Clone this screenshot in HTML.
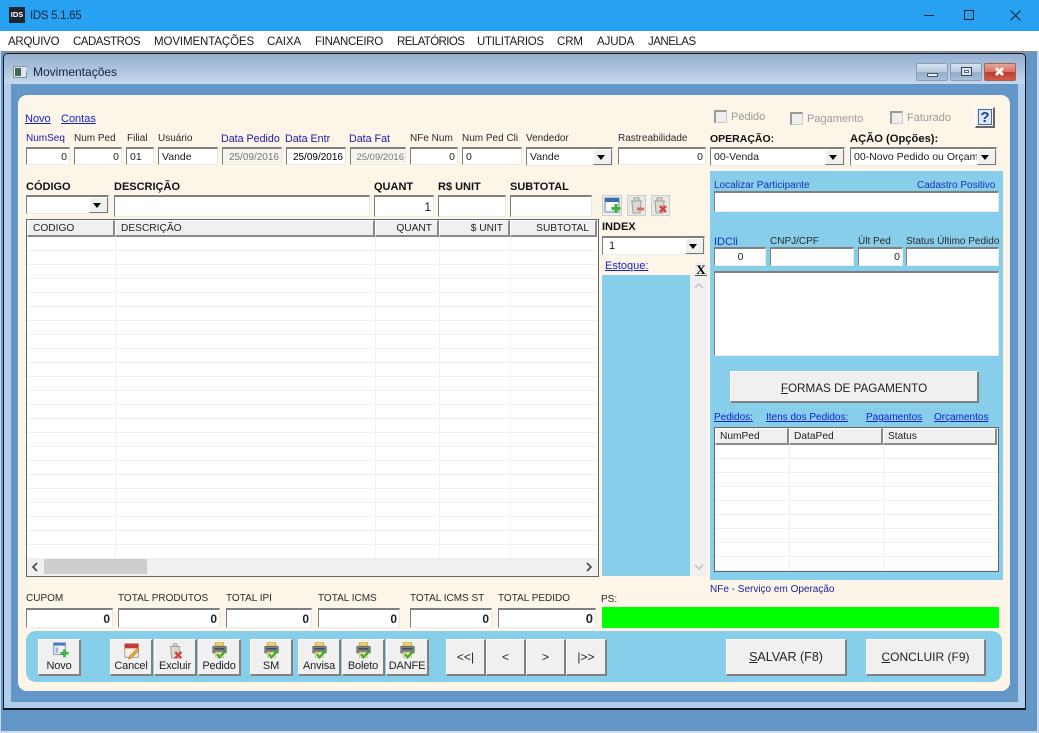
<!DOCTYPE html>
<html><head><meta charset="utf-8">
<style>
html,body{margin:0;padding:0;width:1039px;height:733px;overflow:hidden;background:#6497c8;font-family:"Liberation Sans",sans-serif;font-size:11px;color:#222}
div,a,span.t{position:absolute;box-sizing:border-box}
.l{white-space:nowrap;line-height:14px;height:14px;font-size:10px;color:#2a2a2a}
.b{color:#1a1aa8}
.lk{color:#1622c8;text-decoration:underline}
.h{font-weight:bold;color:#111;font-size:11px}
.f{background:#fff;border-top:2px solid #808080;border-left:1px solid #808080;border-right:1px solid #e8e8e8;border-bottom:1px solid #ececec;line-height:17px;font-size:10.5px;padding:0 2px 0 3px;white-space:nowrap;overflow:hidden;color:#222}
.r{text-align:right}
.d{color:#777;background:#f7f4ee}
.ar{position:absolute;right:0;top:0;bottom:0;width:17px;background:#f0f0f0;border:1px solid #fff;border-right-color:#777;border-bottom-color:#777}
.ar:after{content:"";position:absolute;left:3px;top:50%;margin-top:-2px;border:4px solid transparent;border-top:5px solid #000;border-bottom:0}
.btn{background:#f0f0f0;border:1px solid #fff;border-right:2px solid #808080;border-bottom:2px solid #808080;text-align:center;color:#222}
.ib{font-size:11px;letter-spacing:-.15px;line-height:14px;padding-top:19px}
.ib svg{position:absolute;left:12px;top:2px}
.nb{font-size:12px;line-height:34px}
.big{font-size:12.5px;line-height:33px}
.th{position:absolute;top:0;height:100%;background:#f0f0f0;border-right:2px solid #8a8a8a;border-bottom:2px solid #8a8a8a;border-top:1px solid #fff;border-left:1px solid #fff;font-size:10.2px;line-height:16px;padding:0 4px;white-space:nowrap;color:#222}
.mg .th{padding:0 5px 0 5px}
.cb{width:13px;height:13px;background:#eee;border:1px solid #ccc;border-top:2px solid #999;border-left:2px solid #999}
.g{color:#9a9a9a;font-size:11px}
.m{top:31px;height:20px;line-height:22px;font-size:11.5px;letter-spacing:-.1px;color:#1a1a1a;white-space:nowrap}
.v{background:#f2f2f2;width:1px}
.wb{top:63px;height:18px;width:32px;border:1px solid #8a9db5;border-radius:2px;background:linear-gradient(#d6e2f0 0,#b5c8dd 50%,#93adc8 52%,#a8c0d8 100%)}
u{text-decoration:underline}
</style></head><body>
<svg width="0" height="0" style="position:absolute"><defs>
<symbol id="pr" viewBox="0 0 20 20">
<rect x="5" y="0" width="10" height="6" fill="#ecd070" stroke="#c0a848" stroke-width=".8"/>
<rect x="2" y="5" width="16" height="8" rx="1" fill="#80868a" stroke="#5a5f65" stroke-width=".8"/>
<rect x="4" y="7" width="12" height="2" fill="#484c50"/>
<rect x="5" y="12" width="10" height="6" fill="#f4e8b8" stroke="#c0a848" stroke-width=".6"/>
<path d="M7 14l3 4 7-8" fill="none" stroke="#33b02c" stroke-width="2.6"/>
</symbol></defs></svg>

<!-- title bar -->
<div style="left:0;top:0;width:1039px;height:31px;background:#27a2f3"></div>
<div style="left:9px;top:7px;width:16px;height:16px;background:#1c2630;color:#fff;font-size:7.5px;font-weight:bold;line-height:15px;text-align:center">IDS</div>
<div style="left:30px;top:8px;height:16px;line-height:16px;font-size:11.5px;letter-spacing:-.3px;color:#12263a;white-space:nowrap">IDS 5.1.65</div>
<svg style="position:absolute;left:920px;top:8px" width="110" height="16"><path d="M4 7.5H14" stroke="#123" stroke-width="1"/><rect x="44.5" y="2.5" width="9" height="9" fill="none" stroke="#123" stroke-width="1"/><path d="M90.5 2.500l10 10M100.500 2.500l-10 10" stroke="#123" stroke-width="1"/></svg>

<!-- menu -->
<div style="left:0;top:31px;width:1039px;height:20px;background:#fff"></div>
<div class="m" style="left:8px;letter-spacing:-.25px">ARQUIVO</div>
<div class="m" style="left:73px;letter-spacing:-.5px">CADASTROS</div>
<div class="m" style="left:154px">MOVIMENTAÇÕES</div>
<div class="m" style="left:267px">CAIXA</div>
<div class="m" style="left:315px;letter-spacing:-.3px">FINANCEIRO</div>
<div class="m" style="left:397px;letter-spacing:-.6px">RELATÓRIOS</div>
<div class="m" style="left:477px;letter-spacing:-.3px">UTILITARIOS</div>
<div class="m" style="left:557px">CRM</div>
<div class="m" style="left:597px">AJUDA</div>
<div class="m" style="left:648px;letter-spacing:-.5px">JANELAS</div>

<!-- MDI -->
<div style="left:0;top:51px;width:1039px;height:682px;background:#6497c8;border-left:1px solid #c9dcee;border-right:2px solid #c9dcee;border-bottom:2px solid #c9dcee"></div>
<div style="left:3px;top:51px;width:1034px;height:2px;background:#8a9097"></div>
<!-- child window -->
<div style="left:3px;top:53px;width:1023px;height:657px;background:#b0cdeb;border:1px solid #101820;border-bottom:2px solid #101820;border-radius:5px 5px 0 0"></div>
<div style="left:4px;top:54px;width:1021px;height:30px;background:linear-gradient(#94aecd,#c6d9ee);border-radius:4px 4px 0 0"></div>
<div style="left:11px;top:84px;width:1007px;height:618px;background:#6497c8"></div>
<svg style="position:absolute;left:13px;top:66px" width="16" height="13"><rect x=".5" y=".5" width="13" height="11" fill="#dfe6e8" stroke="#8a9094"/><rect x="2" y="2" width="6" height="8" fill="#3d6a5a"/><path d="M13 1v4" stroke="#fff"/></svg>
<div style="left:33px;top:65px;height:15px;line-height:15px;font-size:12px;color:#14233a;white-space:nowrap">Movimentações</div>
<div class="wb" style="left:916px"><div style="left:10px;top:9px;width:11px;height:4px;background:#eef;border:1px solid #456"></div></div>
<div class="wb" style="left:950px"><div style="left:10px;top:3px;width:11px;height:9px;background:#d8e4ef;border:1px solid #345"><div style="left:2px;top:2px;width:5px;height:3px;background:#fff;border:1px solid #567"></div></div></div>
<div class="wb" style="left:984px;border-color:#a8604f;background:linear-gradient(#e8a59a 0,#d6705f 50%,#b93a28 52%,#cf5a48 100%)"><svg style="position:absolute;left:9px;top:2px" width="12" height="12"><path d="M2 2l7 7M9 2l-7 7" stroke="#f4f4f4" stroke-width="3"/></svg></div>

<!-- cream -->
<div style="left:18px;top:95px;width:992px;height:596px;background:#fdf5e8;border-radius:9px"></div>

<!-- top links -->
<div class="l lk" style="left:25px;top:112px;font-size:11px">Novo</div>
<div class="l lk" style="left:61px;top:112px;font-size:11px">Contas</div>

<div class="cb" style="left:714px;top:110px"></div><div class="l g" style="left:731px;top:110px">Pedido</div>
<div class="cb" style="left:790px;top:112px"></div><div class="l g" style="left:807px;top:112px">Pagamento</div>
<div class="cb" style="left:890px;top:111px"></div><div class="l g" style="left:907px;top:111px">Faturado</div>
<div style="left:975px;top:107px;width:20px;height:21px;background:#f0f0f0;border:1px solid #fff;border-right:2px solid #666;border-bottom:2px solid #666"><div style="left:2px;top:1px;width:14px;height:16px;background:#dce8f6;border:1px solid #4a6a9a;color:#1a3fa0;font-weight:bold;font-size:15px;line-height:15px;text-align:center">?</div></div>

<!-- labels row 1 -->
<div class="l b" style="left:26px;top:132px">NumSeq</div>
<div class="l" style="left:74px;top:132px">Num Ped</div>
<div class="l" style="left:127px;top:132px">Filial</div>
<div class="l" style="left:158px;top:132px">Usuário</div>
<div class="l b" style="left:221px;top:132px;font-size:10.7px">Data Pedido</div>
<div class="l b" style="left:285px;top:132px;font-size:10.7px">Data Entr</div>
<div class="l b" style="left:349px;top:132px;font-size:10.7px">Data Fat</div>
<div class="l" style="left:410px;top:132px">NFe Num</div>
<div class="l" style="left:462px;top:132px">Num Ped Cli</div>
<div class="l" style="left:526px;top:132px">Vendedor</div>
<div class="l" style="left:618px;top:132px">Rastreabilidade</div>
<div class="l h" style="left:710px;top:132px;font-size:10.5px">OPERAÇÃO:</div>
<div class="l h" style="left:850px;top:132px;font-size:11.2px">AÇÃO (Opções):</div>

<!-- fields row 1 -->
<div class="f r" style="left:26px;top:147px;width:44px;height:18px">0</div>
<div class="f r" style="left:74px;top:147px;width:48px;height:18px">0</div>
<div class="f" style="left:126px;top:147px;width:28px;height:18px">01</div>
<div class="f" style="left:158px;top:147px;width:60px;height:18px">Vande</div>
<div class="f r d" style="left:222px;top:147px;width:60px;height:18px;font-size:10px">25/09/2016</div>
<div class="f r" style="left:286px;top:147px;width:60px;height:18px;font-size:10px;color:#000">25/09/2016</div>
<div class="f r d" style="left:350px;top:147px;width:56px;height:18px;font-size:9.5px;padding-right:1px;padding-left:1px">25/09/2016</div>
<div class="f r" style="left:410px;top:147px;width:48px;height:18px">0</div>
<div class="f" style="left:462px;top:147px;width:60px;height:18px">0</div>
<div class="f" style="left:526px;top:147px;width:87px;height:19px">Vande<span class="ar"></span></div>
<div class="f r" style="left:618px;top:147px;width:88px;height:18px">0</div>
<div class="f" style="left:710px;top:147px;width:135px;height:19px">00-Venda<span class="ar"></span></div>
<div class="f" style="left:850px;top:147px;width:147px;height:19px">00-Novo Pedido ou Orçame<span class="ar"></span></div>

<!-- row 2 -->
<div class="l h" style="left:26px;top:180px">CÓDIGO</div>
<div class="l h" style="left:114px;top:180px">DESCRIÇÃO</div>
<div class="l h" style="left:374px;top:180px">QUANT</div>
<div class="l h" style="left:438px;top:180px">R$ UNIT</div>
<div class="l h" style="left:510px;top:180px">SUBTOTAL</div>
<div class="f" style="left:26px;top:195px;width:83px;height:19px"><span class="ar"></span></div>
<div class="f" style="left:114px;top:195px;width:256px;height:22px"></div>
<div class="f r" style="left:374px;top:195px;width:60px;height:22px;font-size:12px;line-height:20px">1</div>
<div class="f" style="left:438px;top:195px;width:68px;height:22px"></div>
<div class="f" style="left:510px;top:195px;width:82px;height:22px"></div>

<!-- mini icon buttons -->
<svg style="position:absolute;left:602px;top:195px" width="68" height="22">
<rect x=".5" y=".5" width="19" height="20" fill="#eef0f0" stroke="#ccc"/>
<rect x="3" y="3" width="14" height="14" fill="#f8f8f8" stroke="#6a87b0"/><rect x="3" y="3" width="14" height="4" fill="#3f6cb0"/>
<path d="M14 9v9M9.500 13.500h9" stroke="#3cb53c" stroke-width="3"/>
<rect x="25.500" y=".5" width="18" height="20" fill="#e8e8e4" stroke="#ccc"/>
<path d="M29 6h11M30 6l1 12h7l1-12M32 3h5v3h-5z" fill="#d8d8d4" stroke="#9aa0a0"/><path d="M35 14h7" stroke="#d87060" stroke-width="3"/>
<rect x="49.500" y=".5" width="18" height="20" fill="#e8e8e4" stroke="#ccc"/>
<path d="M52 6h11M53 6l1 12h7l1-12M55 3h5v3h-5z" fill="#d8d8d4" stroke="#9aa0a0"/><path d="M58 11l6 6M64 11l-6 6" stroke="#d8403a" stroke-width="2.4"/>
</svg>

<!-- main grid -->
<div style="left:26px;top:219px;width:573px;height:358px;background:#fff;border:1px solid #666"></div>
<div style="left:27px;top:237px;width:570px;height:322px;background:repeating-linear-gradient(#fff 0,#fff 13px,#f0f0f0 13px,#f0f0f0 14px)"></div>
<div class="mg" style="left:27px;top:220px;width:570px;height:17px">
<div class="th" style="left:0;width:88px">CODIGO</div>
<div class="th" style="left:88px;width:260px">DESCRIÇÃO</div>
<div class="th r" style="left:348px;width:64px">QUANT</div>
<div class="th r" style="left:412px;width:71px">$ UNIT</div>
<div class="th r" style="left:483px;width:87px;padding-right:6px">SUBTOTAL</div>
</div>
<div class="v" style="left:115px;top:237px;height:322px"></div>
<div class="v" style="left:375px;top:237px;height:322px"></div>
<div class="v" style="left:439px;top:237px;height:322px"></div>
<div class="v" style="left:510px;top:237px;height:322px"></div>
<div style="left:27px;top:559px;width:571px;height:17px;background:#f0f0f0"></div>
<div style="left:44px;top:559px;width:103px;height:15px;background:#cdcdcd"></div>
<svg style="position:absolute;left:30px;top:562px" width="564" height="10"><path d="M7 1L3 5l4 4" fill="none" stroke="#444" stroke-width="1.600"/><path d="M557 1l4 4-4 4" fill="none" stroke="#444" stroke-width="1.600"/></svg>

<!-- index / estoque -->
<div class="l h" style="left:602px;top:220px">INDEX</div>
<div class="f" style="left:602px;top:236px;width:103px;height:19px;font-size:11px">&nbsp;1<span class="ar"></span></div>
<div class="l lk" style="left:605px;top:259px;font-size:11px">Estoque:</div>
<div style="left:695px;top:263px;width:12px;height:13px;background:#eee;border-bottom:1px solid #555;font:bold 13px 'Liberation Serif',serif;line-height:13px;text-align:center;color:#000">X</div>
<div style="left:602px;top:275px;width:88px;height:301px;background:#87ceeb"></div>
<div style="left:690px;top:276px;width:18px;height:300px;background:#f0f0f0"></div>
<svg style="position:absolute;left:693px;top:280px" width="12" height="296"><path d="M2 8l4-4 4 4" fill="none" stroke="#c0c0c0" stroke-width="1.500"/><path d="M2 285l4 4 4-4" fill="none" stroke="#c0c0c0" stroke-width="1.500"/></svg>

<!-- right panel -->
<div style="left:710px;top:171px;width:293px;height:409px;background:#87ceeb"></div>
<div class="l b" style="left:714px;top:179px;color:#1830b8">Localizar Participante</div>
<div class="l b" style="left:917px;top:179px;color:#1830b8">Cadastro Positivo</div>
<div class="f" style="left:714px;top:191px;width:285px;height:21px"></div>
<div class="l" style="left:714px;top:235px;color:#1830b8;font-size:11px">IDCli</div>
<div class="l" style="left:770px;top:235px">CNPJ/CPF</div>
<div class="l" style="left:858px;top:235px">Últ Ped</div>
<div class="l" style="left:906px;top:235px">Status Último Pedido</div>
<div class="f" style="left:714px;top:247px;width:52px;height:19px;text-align:center">0</div>
<div class="f" style="left:770px;top:247px;width:84px;height:19px"></div>
<div class="f r" style="left:858px;top:247px;width:45px;height:19px">0</div>
<div class="f" style="left:906px;top:247px;width:93px;height:19px"></div>
<div class="f" style="left:714px;top:271px;width:285px;height:85px"></div>
<div class="btn big" style="left:730px;top:371px;width:249px;height:32px;font-size:11.7px"><u>F</u>ORMAS DE PAGAMENTO</div>
<div class="l lk" style="left:714px;top:411px;font-size:10px">Pedidos:</div>
<div class="l lk" style="left:766px;top:411px;font-size:10px">Itens dos Pedidos:</div>
<div class="l lk" style="left:866px;top:411px;font-size:10px">Pagamentos</div>
<div class="l lk" style="left:934px;top:411px;font-size:10px">Orçamentos</div>
<div style="left:714px;top:427px;width:285px;height:145px;background:#fff;border:1px solid #666"></div>
<div style="left:715px;top:445px;width:283px;height:126px;background:repeating-linear-gradient(#fff 0,#fff 13px,#f0f0f0 13px,#f0f0f0 14px)"></div>
<div style="left:715px;top:428px;width:283px;height:17px;background:#f0f0f0">
<div class="th" style="left:0;width:74px">NumPed</div>
<div class="th" style="left:74px;width:94px">DataPed</div>
<div class="th" style="left:168px;width:114px">Status</div>
</div>
<div class="v" style="left:789px;top:445px;height:126px"></div>
<div class="v" style="left:883px;top:445px;height:126px"></div>
<div class="l" style="left:710px;top:583px;color:#1a1aa8">NFe - Serviço em Operação</div>

<!-- totals -->
<div class="l" style="left:26px;top:592px">CUPOM</div>
<div class="l" style="left:118px;top:592px">TOTAL PRODUTOS</div>
<div class="l" style="left:226px;top:592px">TOTAL IPI</div>
<div class="l" style="left:318px;top:592px">TOTAL ICMS</div>
<div class="l" style="left:410px;top:592px">TOTAL ICMS ST</div>
<div class="l" style="left:498px;top:592px">TOTAL PEDIDO</div>
<div class="l" style="left:601px;top:593px">PS:</div>
<div class="f r" style="left:26px;top:608px;width:87px;height:20px;font-weight:bold;font-size:12px;line-height:18px">0</div>
<div class="f r" style="left:118px;top:608px;width:102px;height:20px;font-weight:bold;font-size:12px;line-height:18px">0</div>
<div class="f r" style="left:226px;top:608px;width:86px;height:20px;font-weight:bold;font-size:12px;line-height:18px">0</div>
<div class="f r" style="left:318px;top:608px;width:82px;height:20px;font-weight:bold;font-size:12px;line-height:18px">0</div>
<div class="f r" style="left:410px;top:608px;width:82px;height:20px;font-weight:bold;font-size:12px;line-height:18px">0</div>
<div class="f r" style="left:498px;top:608px;width:98px;height:20px;font-weight:bold;font-size:13px;line-height:18px">0</div>
<div style="left:602px;top:607px;width:397px;height:21px;background:#00ff00"></div>

<!-- bottom bar -->
<div style="left:26px;top:631px;width:976px;height:51px;background:#87ceeb;border-radius:10px"></div>
<div class="btn ib" style="left:38px;top:639px;width:43px;height:37px">Novo
<svg width="18" height="18" viewBox="0 0 20 20"><rect x="3" y="1" width="13" height="13" fill="#eef" stroke="#7a8fb8"/><rect x="3" y="1" width="13" height="3" fill="#4a78b8"/><rect x="5" y="6" width="3" height="6" fill="#a0b4d0"/><path d="M15 8v9M10.500 12.500h9" stroke="#3cb53c" stroke-width="3"/></svg></div>
<div class="btn ib" style="left:110px;top:639px;width:43px;height:37px">Cancel
<svg width="18" height="18" viewBox="0 0 20 20"><rect x="2" y="2" width="15" height="15" fill="#f6f0e4" stroke="#999"/><rect x="2" y="2" width="15" height="5" fill="#c8382c"/><path d="M7 16l9-9 2 2-9 9-3 1z" fill="#f0a838" stroke="#a87020" stroke-width=".6"/></svg></div>
<div class="btn ib" style="left:154px;top:639px;width:43px;height:37px">Excluir
<svg width="18" height="18" viewBox="0 0 20 20"><path d="M3 5h12M4 5l1 13h8l1-13M7 2h4v3H7z" fill="#d8d8d4" stroke="#9aa0a0"/><path d="M9 11l7 7M16 11l-7 7" stroke="#d8403a" stroke-width="2.600"/></svg></div>
<div class="btn ib" style="left:198px;top:639px;width:43px;height:37px">Pedido<svg width="17" height="17"><use href="#pr"/></svg></div>
<div class="btn ib" style="left:250px;top:639px;width:43px;height:37px">SM<svg width="17" height="17"><use href="#pr"/></svg></div>
<div class="btn ib" style="left:298px;top:639px;width:43px;height:37px">Anvisa<svg width="17" height="17"><use href="#pr"/></svg></div>
<div class="btn ib" style="left:342px;top:639px;width:43px;height:37px">Boleto<svg width="17" height="17"><use href="#pr"/></svg></div>
<div class="btn ib" style="left:386px;top:639px;width:43px;height:37px">DANFE<svg width="17" height="17"><use href="#pr"/></svg></div>
<div class="btn nb" style="left:446px;top:639px;width:40px;height:37px">&lt;&lt;|</div>
<div class="btn nb" style="left:486px;top:639px;width:40px;height:37px">&lt;</div>
<div class="btn nb" style="left:526px;top:639px;width:40px;height:37px">&gt;</div>
<div class="btn nb" style="left:566px;top:639px;width:41px;height:37px">|&gt;&gt;</div>
<div class="btn big" style="left:726px;top:639px;width:121px;height:37px;line-height:35px"><u>S</u>ALVAR (F8)</div>
<div class="btn big" style="left:866px;top:639px;width:120px;height:37px;line-height:35px;font-size:12px"><u>C</u>ONCLUIR (F9)</div>
</body></html>
